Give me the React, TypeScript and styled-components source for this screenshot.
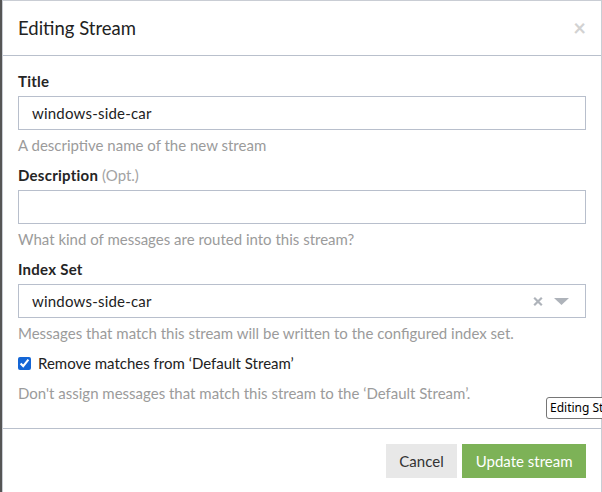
import React from "react";
import styled, { createGlobalStyle } from "styled-components";

const Global = createGlobalStyle`
  html, body { margin: 0; padding: 0; background: #5a5a5a; }
  body { font-family: Lato, "Noto Sans", sans-serif; font-size: 15px; color: #333; }
  * { box-sizing: border-box; }
`;

const Backdrop = styled.div`
  width: 602px;
  height: 492px;
  padding-left: 2px;
  background: #555;
  overflow: hidden;
  position: relative;
`;

const Modal = styled.div`
  height: 492px;
  background: #fff;
  border: 1px solid #c9cdd4;
  border-bottom: none;
  display: flex;
  flex-direction: column;
`;

const Header = styled.div`
  height: 55px;
  flex: none;
  display: flex;
  align-items: center;
  justify-content: space-between;
  padding: 0 15px 0 15px;
  border-bottom: 1px solid #b9c0cc;
`;

const HeaderTitle = styled.h4`
  margin: 0;
  font-size: 18.5px;
  font-weight: 400;
  color: #222;
`;

const Close = styled.span`
  font-size: 22px;
  font-weight: 700;
  color: #d2d2d2;
  line-height: 1;
  margin-top: -1px;
`;

const Body = styled.div`
  flex: none;
  padding: 15px 15px 0 15px;
  height: 373px;
  border-bottom: 1px solid #b9c0cc;
`;

const Field = styled.div`
  margin-bottom: 10px;
`;

const Label = styled.div`
  font-weight: 700;
  font-size: 15px;
  letter-spacing: 0.25px;
  color: #252525;
  line-height: 20px;
  margin-bottom: 5px;
`;

const Opt = styled.span`
  font-weight: 400;
  letter-spacing: 0;
  color: #a3a3a3;
`;

const Input = styled.div`
  height: 34px;
  border: 1px solid #b8bfcc;
  display: flex;
  align-items: center;
  padding: 0 13px;
  font-size: 15px;
  letter-spacing: 0.2px;
  color: #222;
`;

const Help = styled.div`
  margin-top: 5px;
  color: #9b9b9b;
  font-size: 15px;
  line-height: 20px;
`;

const SelectBox = styled(Input)`
  justify-content: space-between;
  padding-right: 16px;
`;

const SelectIcons = styled.div`
  display: flex;
  align-items: center;
  gap: 11px;
`;

const CheckRow = styled.label`
  display: flex;
  align-items: center;
  gap: 7px;
  color: #222;
  margin-top: 10px;
  line-height: 20px;
  height: 20px;
`;

const Check = styled.input`
  margin: 0;
  width: 13px;
  height: 13px;
  accent-color: #1466d6;
`;

const CheckHelp = styled(Help)`
  margin-top: 10px;
`;

const Footer = styled.div`
  display: flex;
  justify-content: flex-end;
  gap: 5px;
  padding: 15px 15px 0 15px;
`;

const Button = styled.button<{ $primary?: boolean }>`
  height: 34px;
  border: none;
  font-family: inherit;
  font-size: 15px;
  padding: 0 13.5px;
  background: ${(p) => (p.$primary ? "#7db257" : "#e8e8e8")};
  color: ${(p) => (p.$primary ? "#fff" : "#333")};
`;

const Tooltip = styled.div`
  position: absolute;
  left: 546px;
  top: 397px;
  height: 22px;
  padding: 0 3px;
  border: 1px solid #767676;
  border-radius: 3px;
  background: #fff;
  font-family: "Noto Sans", "Open Sans", sans-serif;
  font-size: 12px;
  line-height: 20px;
  color: #000;
  white-space: nowrap;
`;

export default function App() {
  return (
    <>
      <Global />
      <Backdrop>
        <Modal>
          <Header>
            <HeaderTitle>Editing Stream</HeaderTitle>
            <Close>×</Close>
          </Header>
          <Body>
            <Field>
              <Label>Title</Label>
              <Input>windows-side-car</Input>
              <Help>A descriptive name of the new stream</Help>
            </Field>
            <Field>
              <Label>
                Description <Opt>(Opt.)</Opt>
              </Label>
              <Input />
              <Help>What kind of messages are routed into this stream?</Help>
            </Field>
            <Field>
              <Label>Index Set</Label>
              <SelectBox>
                <span>windows-side-car</span>
                <SelectIcons>
                  <svg width="10" height="9" viewBox="0 0 10 9">
                    <path d="M1.2 0.8 L8.8 8.2 M8.8 0.8 L1.2 8.2" stroke="#aeb3ba" strokeWidth="2.2" />
                  </svg>
                  <svg width="15" height="7" viewBox="0 0 15 7">
                    <path d="M0 0 H15 L7.5 7 Z" fill="#aeb3ba" />
                  </svg>
                </SelectIcons>
              </SelectBox>
              <Help>Messages that match this stream will be written to the configured index set.</Help>
            </Field>
            <CheckRow>
              <Check type="checkbox" defaultChecked />
              Remove matches from ‘Default Stream’
            </CheckRow>
            <CheckHelp>Don't assign messages that match this stream to the ‘Default Stream’.</CheckHelp>
          </Body>
          <Footer>
            <Button>Cancel</Button>
            <Button $primary>Update stream</Button>
          </Footer>
        </Modal>
        <Tooltip>Editing Stream</Tooltip>
      </Backdrop>
    </>
  );
}
